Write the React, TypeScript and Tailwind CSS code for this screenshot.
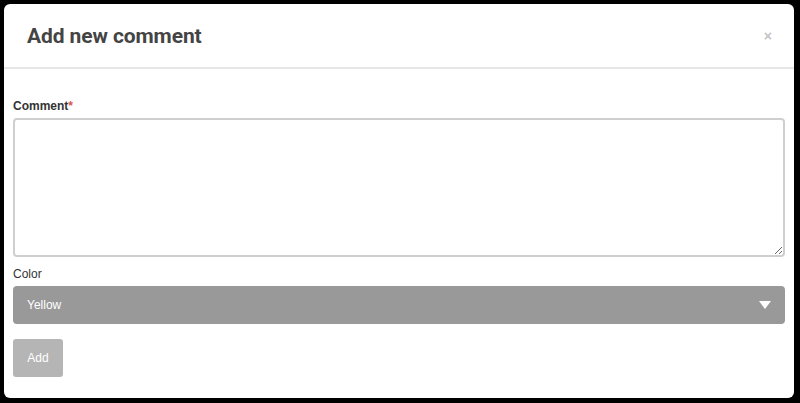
import React from 'react';

export default function App() {
  return (
    <div className="w-[800px] h-[403px] bg-black pt-[4px] pl-[4px] pr-[6px] pb-[5px] font-['Liberation_Sans',Arial,sans-serif]">
      <div className="h-full w-full bg-white rounded-[6px] flex flex-col">
        {/* Header */}
        <div className="h-[65px] flex items-center justify-between pl-[23px] pr-[22px] border-b-2 border-[#e6e6e6]">
          <h2 className="font-['Roboto',sans-serif] font-bold text-[21px] text-[#444] tracking-[-0.1px] pt-[3px]">
            Add new comment
          </h2>
          <button className="text-[#c4c4c4] text-[14px] leading-none font-bold">×</button>
        </div>

        {/* Body */}
        <div className="flex flex-col px-[9px] pt-[30px]">
          <label className="text-[12px] font-bold text-[#333] leading-[14px] mb-[5px]">
            Comment<span className="text-[#d9534f]">*</span>
          </label>
          <textarea className="h-[139px] w-full border-2 border-[#cfcfcf] rounded-[4px] resize-y outline-none" />

          <label className="text-[12px] text-[#333] leading-[14px] mt-[10px] mb-[5px]">Color</label>
          <div className="h-[38px] w-full bg-[#999999] rounded-[4px] flex items-center justify-between pl-[14px] pr-[14px]">
            <span className="text-[12px] text-white">Yellow</span>
            <svg width="12" height="8" viewBox="0 0 12 8">
              <path d="M0 0 L12 0 L6 8 Z" fill="#fff" />
            </svg>
          </div>

          <div className="mt-[15px]">
            <button className="h-[38px] w-[50px] bg-[#b5b5b5] rounded-[3px] text-white text-[12px]">Add</button>
          </div>
        </div>
      </div>
    </div>
  );
}
